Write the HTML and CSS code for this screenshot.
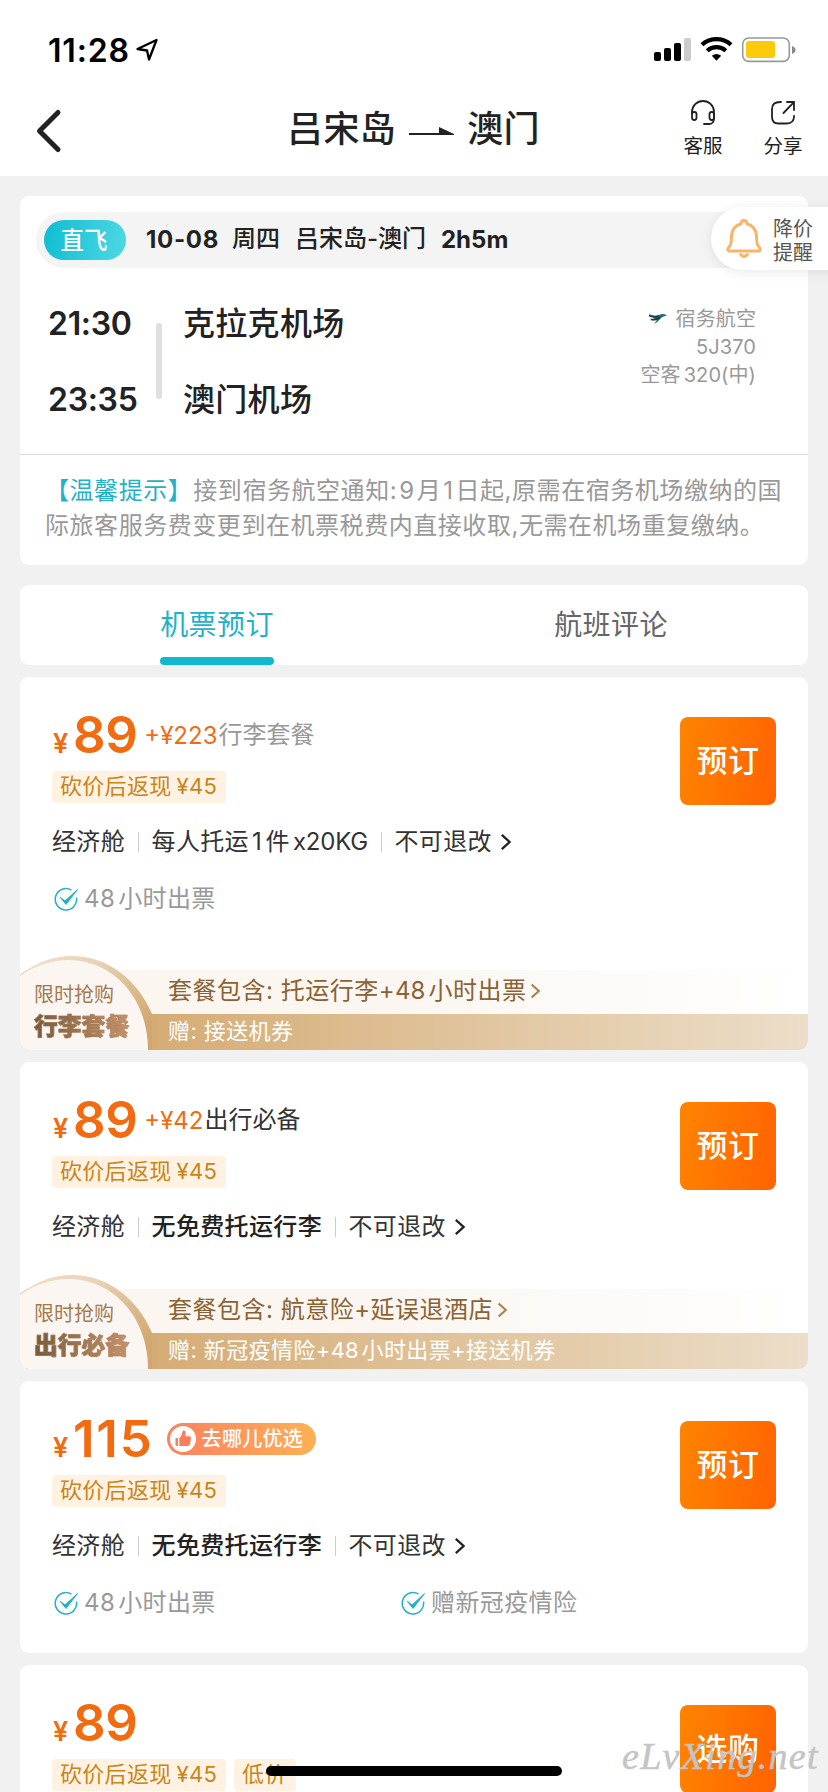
FILE: index.html
```html
<!DOCTYPE html>
<html lang="zh-CN">
<head>
<meta charset="utf-8">
<title>吕宋岛 - 澳门</title>
<link rel="stylesheet" href="styles.css">
</head>
<body>
<svg width="0" height="0" class="defs" aria-hidden="true">
  <defs>
    <linearGradient id="gold" x1="0" y1="0" x2="1" y2="0"><stop offset="0" stop-color="#d5ab73"/><stop offset="1" stop-color="#ecdec9"/></linearGradient>
    <linearGradient id="rim" x1="0" y1="0" x2="1" y2=".7"><stop offset="0" stop-color="#eedfcb"/><stop offset=".4" stop-color="#ead4b8"/><stop offset="1" stop-color="#d2a76e"/></linearGradient>
    <linearGradient id="cream" x1="0" y1="0" x2="1" y2="0"><stop offset="0" stop-color="#fbf6f0"/><stop offset=".4" stop-color="#fbf6f1"/><stop offset="1" stop-color="#ffffff"/></linearGradient>
    <symbol id="check" viewBox="0 0 24 24"><path d="M17.5 3.1A10.7 10.7 0 1 0 22.5 10.5" fill="none" stroke="#1fb2c9" stroke-width="1.5"/><path d="M6.2 10.2L11 14L23.5 2.6L12 17.4Z" fill="#1fb2c9" stroke="#1fb2c9" stroke-width="1" stroke-linejoin="round"/></symbol>
    <symbol id="arrow" viewBox="0 0 12 18"><path d="M1.8 1.8L9.6 9L1.8 16.2" fill="none" stroke="currentColor" stroke-width="2.3"/></symbol>
    <symbol id="promo" viewBox="0 0 788 94">
      <path d="M100 14H788V58H100Z" fill="url(#cream)"/>
      <path d="M120 58H788V94H120Z" fill="url(#gold)"/>
      <path d="M0 18C18 6 34 0 52 0C89 0 118 25 132 58V94H0Z" fill="url(#rim)"/>
      <path d="M0 20C16 9 32 4 48 4C94 4 128 43 128 94H0Z" fill="#fbf6f1"/>
    </symbol>
  </defs>
</svg>
<div class="screen">
  <div class="status">
    <span class="clock">11:28</span>
    <svg class="loc" width="24" height="24" viewBox="0 0 24 24"><path d="M2.5 11L21.5 2L14 21.5L12 12.5Z" fill="none" stroke="#000" stroke-width="2.3" stroke-linejoin="round"/></svg>
    <svg class="sys" width="144" height="28" viewBox="0 0 144 28">
      <rect x="1" y="15" width="7" height="9" rx="2"/><rect x="11" y="11" width="7" height="13" rx="2"/><rect x="21" y="6" width="7" height="18" rx="2"/><rect x="31" y="1" width="7" height="23" rx="2" fill="#ccc"/>
      <path d="M49 7.7A21.5 21.5 0 0 1 78 7.7" fill="none" stroke="#000" stroke-width="4.2"/>
      <path d="M54.2 13.7A14 14 0 0 1 72.8 13.7" fill="none" stroke="#000" stroke-width="4.2"/>
      <path d="M63.5 23.7L58.8 18.8Q63.5 15.2 68.2 18.8Z"/>
      <rect x="89.7" y="1" width="46.6" height="23.4" rx="6" fill="none" stroke="#999" stroke-width="1.6"/>
      <rect x="93" y="4" width="29" height="17" rx="3" fill="#fbcb0a"/>
      <path d="M139 9Q142.5 10.5 142.5 13Q142.5 15.500 139 17Z" fill="#888"/>
    </svg>
  </div>
  <div class="nav">
    <svg class="back" width="28" height="46" viewBox="0 0 28 46"><path d="M24 4.500L5.500 23L24 41.500" fill="none" stroke="#222" stroke-width="5" stroke-linecap="round" stroke-linejoin="round"/></svg>
    <div class="route"><span>吕宋岛</span>
      <svg width="46" height="12" viewBox="0 0 46 12"><path d="M0 7H30V1L45 8V9H0Z" fill="#222"/></svg>
      <span>澳门</span></div>
    <div class="action service">
      <svg width="28" height="28" viewBox="0 0 28 28" fill="none" stroke="#222" stroke-width="1.8" stroke-linecap="round"><path d="M3 14V13A11 11 0 0 1 25 13V20Q24.500 25 20 25H15"/><rect x="3" y="13" width="4.500" height="8" rx="2.200"/><rect x="20.500" y="13" width="4.500" height="8" rx="2.200"/></svg>
      <span>客服</span>
    </div>
    <div class="action share">
      <svg width="28" height="28" viewBox="0 0 28 28" fill="none" stroke="#222" stroke-width="1.8" stroke-linecap="round"><path d="M12 3H11Q3 3 3 10V18Q3 24.500 9.500 24.500H18Q24.500 24.500 25 18V17"/><path d="M14.500 14L25 3.200M18 3H25V11"/></svg>
      <span>分享</span>
    </div>
  </div>

  <main class="list">
    <section class="card flight">
      <div class="strip">
        <span class="direct">直飞</span><b class="date">10-08</b><span class="week">周四</span><span class="city">吕宋岛-澳门</span><b class="dur">2h5m</b>
      </div>
      <div class="alert">
        <svg width="38" height="42" viewBox="0 0 38 42" fill="none" stroke="#f9b468" stroke-width="3" stroke-linejoin="round" stroke-linecap="round"><path d="M16 5.800Q16 2.500 19 2.500Q22 2.500 22 5.800Q31 8.500 31.500 18Q31.500 27 34 29Q36.500 32 34 33H4Q1.500 32 4 29Q6.500 27 6.500 18Q7 8.500 16 5.800Z"/><path d="M15.800 36.500Q19 40.500 22.200 36.500"/></svg>
        <span>降价<br>提醒</span>
      </div>
      <div class="legs">
        <div class="times"><span>21:30</span><span>23:35</span></div>
        <div class="rail"></div>
        <div class="ports"><span>克拉克机场</span><span>澳门机场</span></div>
        <div class="plane">
          <div><svg width="20" height="13" viewBox="0 0 20 13"><path d="M1 2Q7 5 11 3Q15 1 19 3.500Q15 4 13 6Q10 10 6 12L9 8Q4 9 2 7Q5 7 7 6Q3 5 1 2Z" fill="#236a82"/><path d="M1 3.500Q6 6 11 4M3 7.500Q8 8.500 12 5.500" fill="none" stroke="#173f35" stroke-width="1.600"/></svg><span>宿务航空</span></div>
          <div class="code">5J370</div>
          <div>空客<span class="num">320(</span>中)</div>
        </div>
      </div>
      <p class="notice"><em>【温馨提示】</em>接到宿务航空通知:<u>9</u>月<u>1</u>日起,原需在宿务机场缴纳的国<br>际旅客服务费变更到在机票税费内直接收取,无需在机场重复缴纳。</p>
    </section>

    <nav class="card tabs"><span class="tab on">机票预订</span><span class="tab">航班评论</span></nav>

    <section class="card fare">
      <div class="top">
        <div><div class="price"><i>¥</i><b>89</b><span class="plus">+¥223</span><span class="pack">行李套餐</span></div>
        <div class="tags"><span class="tag">砍价后返现<u>¥45</u></span></div></div>
        <button>预订</button>
      </div>
      <div class="rule"><span>经济舱</span><s></s><span>每人托运<u class="one">1</u>件<u>x20KG</u></span><s></s><span>不可退改</span><svg width="12" height="18"><use href="#arrow"/></svg></div>
      <div class="perks"><div><svg width="24" height="24"><use href="#check"/></svg><span><u>48</u>小时出票</span></div></div>
      <div class="promo">
        <svg class="bg" width="788" height="94"><use href="#promo"/></svg>
        <div class="label"><span>限时抢购</span><strong>行李套餐</strong></div>
        <div class="offer"><span class="inc">套餐包含: 托运行李+<u>48</u>小时出票<svg width="11" height="18"><use href="#arrow"/></svg></span><span class="gift">赠: 接送机券</span></div>
      </div>
    </section>

    <section class="card fare second">
      <div class="top">
        <div><div class="price"><i>¥</i><b>89</b><span class="plus">+¥42</span><span class="pack dark">出行必备</span></div>
        <div class="tags"><span class="tag">砍价后返现<u>¥45</u></span></div></div>
        <button>预订</button>
      </div>
      <div class="rule"><span>经济舱</span><s></s><span class="strong">无免费托运行李</span><s></s><span>不可退改</span><svg width="12" height="18"><use href="#arrow"/></svg></div>
      <div class="promo">
        <svg class="bg" width="788" height="94"><use href="#promo"/></svg>
        <div class="label"><span>限时抢购</span><strong>出行必备</strong></div>
        <div class="offer"><span class="inc">套餐包含: 航意险+延误退酒店<svg width="11" height="18"><use href="#arrow"/></svg></span><span class="gift">赠: 新冠疫情险+<u>48</u>小时出票+接送机券</span></div>
      </div>
    </section>

    <section class="card fare third">
      <div class="top">
        <div><div class="price"><i>¥</i><b>115</b><span class="best"><svg width="26" height="26" viewBox="0 0 26 26"><circle cx="13" cy="13" r="13" fill="#fff"/><path d="M5.500 12H8V20H7Q5.500 20 5.500 18.500ZM9.300 12Q12 10 12.300 6Q12.600 4.300 14 4.300Q16 4.800 15.600 7.500L15.200 10.300H19.500Q21.300 10.500 21 12.300L20 18Q19.600 20 18 20H9.300Z" fill="#fd7c5b"/></svg>去哪儿优选</span></div>
        <div class="tags"><span class="tag">砍价后返现<u>¥45</u></span></div></div>
        <button>预订</button>
      </div>
      <div class="rule"><span>经济舱</span><s></s><span class="strong">无免费托运行李</span><s></s><span>不可退改</span><svg width="12" height="18"><use href="#arrow"/></svg></div>
      <div class="perks"><div><svg width="24" height="24"><use href="#check"/></svg><span><u>48</u>小时出票</span></div><div><svg width="24" height="24"><use href="#check"/></svg><span>赠新冠疫情险</span></div></div>
    </section>

    <section class="card fare last">
      <div class="top">
        <div><div class="price"><i>¥</i><b>89</b></div>
        <div class="tags"><span class="tag">砍价后返现<u>¥45</u></span><span class="tag">低价</span></div></div>
        <button>选购</button>
      </div>
    </section>
  </main>
  <div class="home"></div>
  <div class="mark">eLvXing.net</div>
</div>
</body>
</html>
```
FILE: styles.css
```css
* { box-sizing: border-box; }
body { margin: 0; background: #f1f1f1; font-family: Inter, "Noto Sans CJK SC", sans-serif; color: #333; }
.defs { position: absolute; }
.screen { position: relative; width: 828px; height: 1792px; overflow: hidden; }
i, em { font-style: normal; }
u, s { text-decoration: none; }
svg { display: block; flex: none; }

.status { display: flex; align-items: center; height: 100px; padding: 0 31px 0 48px; background: #fff; }
.clock { width: 87px; font-size: 32px; font-weight: 600; color: #000; letter-spacing: .8px; }
.loc { margin-top: -1px; }
.sys { margin: 1px 0 0 auto; }

.nav { display: flex; height: 76px; background: #fff; padding-left: 34px; color: #222; }
.back { margin-top: 8px; }
.route { display: flex; align-items: center; height: 60px; margin-left: 225px; font-size: 36px; font-weight: 500; line-height: 60px; letter-spacing: .4px; white-space: nowrap; }
.route span { padding-bottom: 2px; }
.route svg { margin: 4px 12px 0 13px; }
.action { width: 80px; text-align: center; font-size: 19.500px; line-height: 26px; }
.action svg { margin: -1px auto 6px; }
.service { margin-left: 123px; }

.list { display: flex; flex-direction: column; padding: 20px 20px 0; }
.card { flex: none; background: #fff; border-radius: 9px; }

.flight { position: relative; height: 369px; margin-bottom: 20px; padding-top: 16px; color: #222; }
.strip { display: flex; align-items: center; height: 56px; margin-left: 16px; padding-left: 8px; background: #f4f4f4; border-radius: 28px 0 0 28px; font-size: 24px; line-height: 56px; white-space: nowrap; }
.strip b { font-weight: 700; }
.direct { width: 82px; height: 40px; margin-right: 20px; padding-right: 2px; border-radius: 20px; background: linear-gradient(100deg, #0fbdd2, #4fd8e3); color: #fff; font-size: 23.500px; font-weight: 500; line-height: 41px; text-align: center; }
.date { width: 86px; letter-spacing: .7px; }
.week { width: 63px; font-weight: 500; }
.city { width: 146px; font-weight: 500; }
.week, .city { padding-bottom: 2px; }
.alert { position: absolute; top: 11px; left: 691px; display: flex; align-items: center; height: 63px; padding-left: 14px; gap: 10px; width: 137px; border-radius: 32px 0 0 32px; background: #fff; box-shadow: 0 2px 12px rgba(0,0,0,.09); font-size: 20px; line-height: 24px; color: #555; }
.alert span { padding-top: 4px; }
.legs { display: flex; height: 186px; padding: 31px 52px 0 28px; }
.times, .ports { display: flex; flex-direction: column; gap: 36px; padding-top: 5px; font-size: 32px; line-height: 40px; font-weight: 600; }
.times { width: 108px; letter-spacing: -.3px; }
.rail { width: 6px; height: 76px; margin-top: 24px; border-radius: 3px; background: #e0e0e0; }
.ports { margin-left: 21px; font-weight: 500; letter-spacing: .3px; }
.plane { display: flex; flex-direction: column; align-items: flex-end; margin-left: auto; padding-top: 6px; font-size: 20px; line-height: 28px; letter-spacing: .1px; color: #999; }
.plane div { display: flex; align-items: center; }
.plane svg { margin-right: 8px; margin-top: -1px; }
.num { margin-left: 3px; }
.notice { margin: 0; padding: 19px 0 0 25px; border-top: 1px solid #ddd; font-size: 24px; line-height: 34.500px; letter-spacing: .55px; white-space: nowrap; color: #999; }
.notice em { margin-right: 1px; color: #1fb2c9; }
.notice u { margin: 0 2px; }

.tabs { display: flex; height: 80px; margin-bottom: 12px; }
.tab { position: relative; flex: 1; text-align: center; font-size: 28px; letter-spacing: .4px; line-height: 80px; color: #666; }
.on { color: #1fb2c9; }
.on::after { content: ""; position: absolute; left: 140px; bottom: 0; width: 114px; height: 8px; border-radius: 4px; background: #0fbad0; }

.fare { height: 373px; margin-bottom: 12px; overflow: hidden; padding-top: 28px; }
.second { height: 307px; }
.third { height: 272px; }
.top { display: flex; justify-content: space-between; height: 100px; padding: 0 32px; }
.price { display: flex; align-items: baseline; height: 60px; line-height: 60px; white-space: nowrap; color: #f26b10; }
.price i { width: 20px; margin-left: 1px; font-size: 27px; font-weight: 600; }
.price b { font-size: 51px; font-weight: 600; letter-spacing: -.5px; }
.third .price b { letter-spacing: 1.800px; }
.plus { margin-left: 7px; font-size: 24px; position: relative; top: -9px; }
.pack { margin-left: 1px; font-size: 24px; position: relative; top: -10px; color: #999; }
.dark { color: #333; }
.best { align-self: center; display: flex; align-items: center; gap: 6px; height: 32px; margin-left: 13px; padding: 0 13px 0 3px; border-radius: 16px; background: linear-gradient(90deg, #fd8160, #ffb054); color: #fff; font-size: 20px; font-weight: 500; letter-spacing: .3px; }
.tags { display: flex; gap: 8px; margin-top: 6px; }
.tag { height: 32px; padding: 0 9px 0 8px; border-radius: 4px; background: #fff2e2; color: #c9851a; font-size: 22px; line-height: 31px; letter-spacing: .3px; white-space: nowrap; }
.tag u { margin-left: 5px; }
button { width: 96px; height: 88px; margin-top: 12px; padding: 0; border: 0; border-radius: 8px; background: linear-gradient(100deg, #ff8400, #ff6300); color: #fff; font: 500 31px/82px Inter, "Noto Sans CJK SC", sans-serif; letter-spacing: .6px; }
.rule { display: flex; align-items: center; height: 34px; margin: 20px 0 0 32px; font-size: 24px; line-height: 34px; letter-spacing: .35px; white-space: nowrap; }
.rule s { width: 1px; height: 20px; margin: 0 13px 0 12.500px; background: #ccc; }
.rule svg { margin-left: 8px; color: #222; }
.rule u { margin-left: 3px; letter-spacing: -.2px; }
.rule .one { margin-right: 4px; }
.strong { font-weight: 500; color: #222; }
.perks { display: flex; height: 34px; margin: 23px 0 0 34px; color: #999; font-size: 24px; line-height: 34px; letter-spacing: .4px; }
.perks div { display: flex; align-items: center; gap: 6px; width: 347px; }
.perks u { margin-right: 3px; }
.promo { position: relative; display: flex; height: 94px; margin-top: 40px; }
.second .promo { margin-top: 31px; }
.bg { position: absolute; inset: 0; }
.label { position: relative; display: flex; flex-direction: column; width: 148px; padding: 25px 0 0 14px; font-size: 20px; line-height: 28px; color: #a37a50; }
.label strong { margin-top: 2px; font-size: 23.800px; line-height: 32px; font-weight: 900; width: 96px; background: linear-gradient(90deg, #785a3c, #c8936b); -webkit-background-clip: text; background-clip: text; color: transparent; -webkit-text-stroke: .7px rgba(160,120,80,.5); }
.offer { position: relative; display: flex; flex-direction: column; padding-top: 14px; white-space: nowrap; }
.inc { display: flex; align-items: center; white-space: pre; height: 44px; font-size: 24px; line-height: 42px; letter-spacing: .5px; color: #8a6233; padding-bottom: 2px; }
.inc svg { margin-left: 4px; color: #a9814f; }
.gift { height: 36px; font-size: 22px; line-height: 35px; letter-spacing: .4px; color: #fff; }
.inc u, .gift u { margin-right: 3px; letter-spacing: 0; }

.home { position: absolute; left: 266px; top: 1766px; width: 296px; height: 10px; border-radius: 5px; background: #000; }
.mark { position: absolute; left: 622px; top: 1731px; font: italic 38px/50px "Liberation Serif", serif; letter-spacing: 1.300px; color: #c4c4c4; -webkit-text-stroke: .5px #c4c4c4; white-space: nowrap; }
```
